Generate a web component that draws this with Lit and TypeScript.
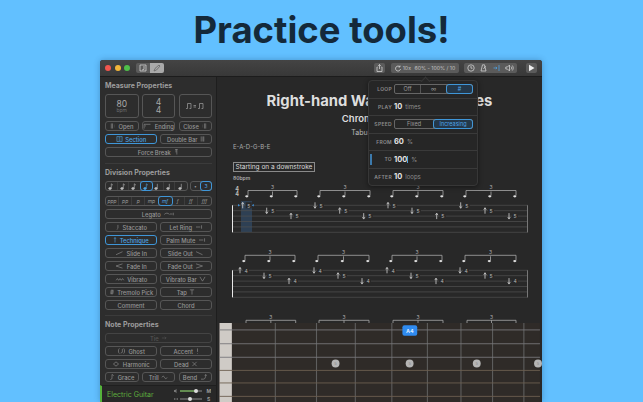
import { LitElement, css, html, svg } from 'lit';
import { customElement } from 'lit/decorators.js';

const ico = (d: string, w = 8, extra = '') => html`<svg class="ico ${extra}" width=${w} height="7" viewBox="0 0 ${w} 7"><path d=${d}></path></svg>`;

const ICONS: Record<string, ReturnType<typeof ico>> = {
  open: ico('M1 .5V6.500M2.500 .5V6.500M4.500 2.500h.5M4.500 4.500h.5', 6),
  ending: ico('M.5 6.500V1.500H8M2 4V2.800', 9),
  close: ico('M5 .5V6.500M3.500 .5V6.500M1 2.500h.5M1 4.500h.5', 6),
  section: ico('M.5 .5h6v6h-6zM2.500 2h2M2.500 3.500h2M2.500 5h2', 7),
  dbl: ico('M1 .5V6.500M3 .5V6.500M4 .5V6.500', 5),
  pilcrow: ico('M2 .5h3M4 .5V6.500M3 .5V4', 6),
  legato: ico('M.5 4c2-2 4-2 6 0M7 3.500h3M11 2v3', 12),
  staccato: ico('M3 1V5M3 5.500l-1 .5M1 6.500h.3', 5),
  letring: ico('M.5 3.500h5M7 1.500v4', 8),
  tech: ico('M2 6.500V1M1 2l1-1.500L3 2', 4),
  slidein: ico('M.5 5.500L8 2', 9),
  slideout: ico('M.5 2L8 5.500', 9),
  fadein: ico('M8 1L.5 3.500L8 6', 9),
  fadeout: ico('M.5 1L8 3.500L.5 6', 9),
  vib: ico('M.5 5l1.500-2l1.500 2l1.500-2l1.500 2l1.500-2l1.500 2', 10),
  vibbar: ico('M.5 1L3.500 6L6.500 1', 7),
  tremolo: ico('M3 .5V6.500M1 2.500l4-1M1 4l4-1M1 5.500l4-1', 6),
  tap: ico('M.5 1h5M3 1v5.500', 6),
  tie: ico('M.5 3.500h5M4 2l1.500 1.500L4 5', 6),
  ghost: ico('M2 .5C.5 2 .5 5 2 6.500M7 .5C8.500 2 8.500 5 7 6.500M5.500 1v4l-2 1', 9),
  accent: ico('M1.500 .5V4.500M1.500 5.800v.7', 3),
  harmonic: ico('M4 1l3 2.500L4 6L1 3.500z', 8),
  dead: ico('M1 1l5 5M6 1L1 6', 7),
  grace: ico('M3 .5V5.500M3 5.500l-2 1M3 .5l2 1.500', 6),
  trill: ico('M.5 4c1-2 2-2 3 0s2 2 3 0', 7),
  bend: ico('M.5 6h3C5 6 6 4 6 1M5 2l1-1.500L7 2', 8),
};

interface Btn { t: string; i?: string; after?: boolean; on?: boolean; off?: boolean }

// fret positions and tab data are read straight off the reference
const STAFF_A = [
  [242.7, 1, 0, 5], [266.7, 0, 1, 5], [291, 1, 2, 5], [315, 0, 0, 5], [339.7, 1, 1, 5], [363.7, 0, 2, 5],
  [388, 1, 0, 5], [412, 0, 1, 5], [436.7, 1, 2, 5], [460.7, 0, 0, 5], [485, 1, 1, 5], [509, 0, 2, 5],
];
const STAFF_B = [
  [240, 1, 0, 4], [264, 0, 1, 5], [289, 1, 2, 4], [314, 0, 0, 4], [338, 1, 1, 5], [362, 0, 2, 4],
  [387, 1, 0, 4], [411, 0, 1, 5], [436, 1, 2, 4], [460, 0, 0, 4], [485, 1, 1, 5], [509, 0, 2, 4],
];

const triplet = (x1: number, x2: number, y: number) => {
  const mid = (x1 + x2) / 2;
  return svg`
    <path class="beam" d="M${x1} ${y + 5}V${y}H${x2}V${y + 5}M${mid} ${y + 1}V${y + 5}"></path>
    <text class="tn" x=${mid} y=${y - 1.5} text-anchor="middle">3</text>
    ${[x1, mid, x2].map((x) => svg`<ellipse class="head" cx=${x - 1.2} cy=${y + 5.8} rx="1.600" ry="1.100"></ellipse>`)}`;
};

const staff = (top: number, rows: number[][]) => {
  const ys = [0, 5.4, 10.8, 16.2, 21.6, 27].map((d) => top + d);
  return svg`
    ${ys.map((y) => svg`<line class="line" x1="232" x2="528" y1=${y} y2=${y}></line>`)}
    <line class="bar" x1="232.500" x2="232.500" y1=${top} y2=${top + 27}></line>
    <line class="endbar" x1="527.500" x2="527.500" y1=${top} y2=${top + 27}></line>
    ${rows.map(([x, up, s, n]) => {
      const y = ys[s];
      const d = up
        ? `M${x} ${y + 3}V${y - 2.500}M${x - 1.200} ${y - 1}L${x} ${y - 3}L${x + 1.200} ${y - 1}`
        : `M${x} ${y - 3}V${y + 2.500}M${x - 1.200} ${y + 1}L${x} ${y + 3}L${x + 1.200} ${y + 1}`;
      return svg`<rect class="mask" x=${x + 3} y=${y - 3} width="6" height="6"></rect>
        <path class="arrow" d=${d}></path>
        <text class="fret" x=${x + 4.5} y=${y + 2.300}>${n}</text>`;
    })}`;
};

@customElement('app-root')
export class AppRoot extends LitElement {
  static styles = css`
    :host {
      display: flex;
      flex-direction: column;
      width: 643px;
      height: 402px;
      overflow: hidden;
      background: #62c0ff;
      font-family: Inter, 'Liberation Sans', sans-serif;
    }
    h1 {
      margin: 0;
      height: 60px;
      line-height: 60px;
      text-align: center;
      font-size: 36.500px;
      font-weight: 700;
      color: #14293a;
    }
    .win {
      flex: 1;
      min-height: 0;
      margin: 0 101px 0 100px;
      display: flex;
      flex-direction: column;
      background: #282828;
      border-radius: 3px 3px 0 0;
      overflow: hidden;
      box-shadow: 0 0 6px rgba(0, 40, 80, 0.3);
    }
    .bar-top {
      height: 17px;
      flex: none;
      display: flex;
      align-items: center;
      padding-left: 5px;
      background: linear-gradient(#444, #383838);
      border-bottom: 1px solid #1c1c1c;
      box-sizing: border-box;
    }
    .lights { display: flex; gap: 3.500px; margin-right: 6px; }
    .lights i { width: 6px; height: 6px; border-radius: 50%; }
    .tb {
      height: 10px;
      background: #5b5b5b;
      border-radius: 2px;
      display: flex;
      align-items: center;
      justify-content: center;
      color: #c4c4c4;
      font-size: 5.200px;
      white-space: nowrap;
    }
    .tb svg { fill: none; stroke: #d0d0d0; stroke-width: 0.800; }
    .seg-a { width: 14px; }
    .seg-b { width: 14px; background: #a9a9a9; }
    .seg-b svg { stroke: #666; }
    .spring { flex: 1; }
    .share { width: 11px; margin-right: 6px; }
    .range { width: 68px; margin-right: 5px; gap: 2px; }
    .tools { width: 53px; margin-right: 9px; justify-content: space-around; }
    .play { width: 11px; margin-right: 5px; }
    .body { flex: 1; min-height: 0; display: flex; }
    .side {
      width: 117px;
      flex: none;
      box-sizing: border-box;
      background: #2d2d2d;
      border-right: 1px solid #1e1e1e;
      display: flex;
      flex-direction: column;
      color: #a2a2a2;
    }
    .props { padding: 4px 4px 0 5px; flex: 1; min-height: 0; }
    .h {
      height: 10px;
      line-height: 10px;
      font-size: 7px;
      font-weight: 700;
      color: #9c9c9c;
      margin-bottom: 3px;
    }
    .sep { height: 1px; background: #3b3b3b; margin: 6px 0 4px; }
    .sep.low { margin: 5px 0 4px; }
    .boxes { display: grid; grid-template-columns: repeat(3, 33.500px); justify-content: space-between; margin-bottom: 3px; }
    .big {
      height: 24px;
      box-sizing: border-box;
      border: 1px solid #565656;
      border-radius: 3px;
      display: flex;
      flex-direction: column;
      align-items: center;
      justify-content: center;
      font-size: 8.500px;
      line-height: 8px;
      color: #a9a9a9;
    }
    .big small { font-size: 5px; line-height: 5px; color: #6f6f6f; }
    .big svg { fill: none; stroke: #a0a0a0; stroke-width: 0.700; }
    .rows { display: flex; flex-direction: column; gap: 3px; }
    .r2, .r3 { display: grid; gap: 3px; }
    .r2 { grid-template-columns: 52px 52px; justify-content: space-between; }
    .r3 { grid-template-columns: repeat(3, 33.500px); justify-content: space-between; }
    .b {
      height: 10px;
      box-sizing: border-box;
      border: 1px solid #565656;
      border-radius: 3px;
      display: flex;
      align-items: center;
      justify-content: center;
      gap: 2.500px;
      font-size: 5.800px;
      font-weight: 500;
      color: #969696;
      white-space: nowrap;
    }
    .b.on { border-color: #3f96d8; color: #4fa6e6; }
    .b.off { color: #555; border-color: #444; }
    .ico { fill: none; stroke: currentColor; stroke-width: 0.700; flex: none; height: 6px; }
    .notes { display: flex; justify-content: space-between; margin-bottom: 5px; }
    .cells {
      height: 10px;
      box-sizing: border-box;
      display: flex;
      border: 1px solid #565656;
      border-radius: 3px;
      font-size: 5px;
      color: #999;
    }
    .cells span {
      display: flex;
      align-items: center;
      justify-content: center;
      width: 11.500px;
      border-right: 1px solid #3d3d3d;
      box-sizing: border-box;
    }
    .cells span:last-child { border-right: 0; }
    .cells span.on { outline: 1px solid #3f96d8; border-radius: 2px; border-right: 0; color: #4fa6e6; }
    .cells.small span { width: 10px; }
    .cells.dyn { margin-bottom: 3px; font-style: italic; }
    .cells.dyn span { width: 13.250px; }
    .cells svg { fill: #bbb; stroke: #bbb; stroke-width: 0.600; }
    .cells .on svg { fill: #4fa6e6; stroke: #4fa6e6; }
    .track {
      margin-top: 3px;
      height: 17px;
      flex: none;
      box-sizing: border-box;
      border-left: 2px solid #55b33b;
      border-top: 1px solid #1f1f1f;
      background: #282828;
      display: flex;
      align-items: center;
      justify-content: space-between;
      padding: 0 5px;
      font-size: 7px;
      color: #5fae3e;
    }
    .mix { display: flex; flex-direction: column; gap: 2px; padding-top: 1px; }
    .mix svg { display: block; }
    .main { flex: 1; min-width: 0; position: relative; display: flex; flex-direction: column; }
    .head-t { text-align: center; color: #ddd; }
    .title { height: 16px; line-height: 16px; margin-top: 16px; font-size: 14.800px; font-weight: 700; color: #dedede; }
    .sub { height: 12px; line-height: 12px; margin-top: 4px; font-size: 9.500px; font-weight: 600; }
    .by { height: 10px; line-height: 10px; margin-top: 3px; font-size: 7px; color: #bbb; }
    .tun { margin: 4px 0 0 16px; height: 10px; line-height: 10px; font-size: 6px; color: #a8a8a8; }
    .note {
      align-self: flex-start;
      margin: 10px 0 0 16px;
      height: 10px;
      line-height: 8px;
      box-sizing: border-box;
      border: 1px solid #8a8a8a;
      padding: 0 1.500px;
      font-size: 6.500px;
      color: #dadada;
      white-space: nowrap;
    }
    .bpm { margin: 2px 0 0 16px; height: 8px; line-height: 8px; font-size: 5px; font-weight: 600; color: #aaa; }
    .score { display: block; flex: none; }
    .line { stroke: #505050; stroke-width: 0.700; }
    .bar { stroke: #e8e8e8; stroke-width: 1; }
    .endbar { stroke: #777; stroke-width: 1; }
    .mask { fill: #282828; }
    .arrow { fill: none; stroke: #d0d0d0; stroke-width: 0.800; }
    .fret { font-size: 5px; fill: #b8b8b8; }
    .tn { font-size: 5px; fill: #aaa; }
    .ts { font-size: 5.500px; font-weight: 700; fill: #bbb; }
    .beam { fill: none; stroke: #a8a8a8; stroke-width: 0.800; }
    .head { fill: #ddd; }
    .sel { fill: rgba(56, 110, 165, 0.35); }
    .caret { fill: #3f8fd8; }
    .str { stroke: #77777a; stroke-width: 0.900; }
    .str.w { stroke: #6d5f50; }
    .fr { stroke: #5e5e5e; stroke-width: 1.100; }
    .dot { fill: #b5b5b5; }
    .dt { font-size: 4px; fill: #888; }
    .badge { fill: #2f8bf0; }
    .bt { font-size: 5.500px; font-weight: 700; fill: #d7e9ff; }
    .pop {
      position: absolute;
      left: 151px;
      top: 3px;
      width: 110px;
      height: 106px;
      box-sizing: border-box;
      background: #262626;
      border: 1px solid #373737;
      border-radius: 4px;
      box-shadow: 0 1px 5px rgba(0, 0, 0, 0.45);
      display: flex;
      flex-direction: column;
    }
    .pop::before {
      content: '';
      position: absolute;
      left: 53px;
      top: -3.500px;
      width: 6px;
      height: 6px;
      background: #262626;
      border-left: 1px solid #373737;
      border-top: 1px solid #373737;
      transform: rotate(45deg);
    }
    .pr {
      flex: 1;
      display: flex;
      align-items: center;
      gap: 2px;
      border-bottom: 1px solid #3a3a3a;
      position: relative;
      font-size: 6px;
      color: #8d8d8d;
    }
    .pr:last-child { border-bottom: 0; }
    .pl {
      width: 23px;
      flex: none;
      text-align: right;
      font-size: 5px;
      font-weight: 600;
      letter-spacing: 0.300px;
      color: #8d8d8d;
    }
    .pr b { font-size: 7.500px; font-weight: 700; color: #e4e4e4; margin-right: 1px; }
    .pseg {
      display: flex;
      width: 79px;
      height: 10px;
      box-sizing: border-box;
      border: 1px solid #666;
      border-radius: 2px;
      font-size: 5.500px;
      color: #9a9a9a;
    }
    .pseg span { flex: 1; display: flex; align-items: center; justify-content: center; border-right: 1px solid #555; }
    .pseg span:last-child { border-right: 0; }
    .pseg .on { outline: 1px solid #3f96d8; border-radius: 2px; color: #4fa6e6; background: #24384a; }
    .mark { position: absolute; left: 1px; top: 3px; width: 1.500px; height: 11px; background: #3c79ab; }
    .cur { display: inline-block; width: 0.800px; height: 7px; background: #4fa6e6; vertical-align: -1px; }
  `;

  private btn(b: Btn) {
    const i = b.i ? ICONS[b.i] : '';
    return html`<div class="b ${b.on ? 'on' : ''} ${b.off ? 'off' : ''}">
      ${b.after ? '' : i}<span>${b.t}</span>${b.after ? i : ''}
    </div>`;
  }

  private noteIcon(flags: number) {
    return html`<svg width="6" height="7" viewBox="0 0 6 7">
      <ellipse cx="2" cy="5.500" rx="1.400" ry="1"></ellipse>
      <path fill="none" d="M3.300 5.500V.8"></path>
      ${flags ? svg`<path fill="none" d="M3.300 .8L5 2.200"></path>` : ''}
    </svg>`;
  }

  render() {
    const rows: Btn[][] = [
      [{ t: 'Staccato', i: 'staccato' }, { t: 'Let Ring', i: 'letring', after: true }],
      [{ t: 'Technique', i: 'tech', on: true }, { t: 'Palm Mute', i: 'letring', after: true }],
      [{ t: 'Slide In', i: 'slidein' }, { t: 'Slide Out', i: 'slideout', after: true }],
      [{ t: 'Fade In', i: 'fadein' }, { t: 'Fade Out', i: 'fadeout', after: true }],
      [{ t: 'Vibrato', i: 'vib' }, { t: 'Vibrato Bar', i: 'vibbar', after: true }],
      [{ t: 'Tremolo Pick', i: 'tremolo' }, { t: 'Tap', i: 'tap', after: true }],
      [{ t: 'Comment' }, { t: 'Chord' }],
    ];
    const dyn = ['ppp', 'pp', 'p', 'mp', 'mf', 'f', 'ff', 'fff'];
    const frets = [274, 315.7, 355, 392, 428, 462, 494, 525.7];
    const dots = [335, 410, 478, 540];
    const strings = [329, 343, 356.7, 370, 382.7, 396.3];
    return html`
      <h1>Practice tools!</h1>
      <div class="win">
        <div class="bar-top">
          <div class="lights">
            <i style="background:#f0564e"></i><i style="background:#f2b53a"></i><i style="background:#4fc04a"></i>
          </div>
          <div class="tb seg-a" style="border-radius:2px 0 0 2px">
            <svg width="8" height="8" viewBox="0 0 8 8"><path d="M1 1h6v6h-6zM5 2v3.500l-2 .5"></path></svg>
          </div>
          <div class="tb seg-b" style="border-radius:0 2px 2px 0">
            <svg width="8" height="8" viewBox="0 0 8 8"><path d="M1 7l1-2.500L6 1l1 1L3.500 6z"></path></svg>
          </div>
          <div class="spring"></div>
          <div class="tb share">
            <svg width="7" height="8" viewBox="0 0 7 8"><path d="M1.500 3H1v4.500h5V3h-.5M3.500 5V.5M2.200 1.800L3.500 .5l1.300 1.300"></path></svg>
          </div>
          <div class="tb range">
            <svg width="6" height="7" viewBox="0 0 6 7"><path d="M5 2A2.500 2.500 0 1 0 5.500 4M5 .5V2H3.500"></path></svg>
            <span>10x</span><span>&nbsp;60% - 100% / 10</span>
          </div>
          <div class="tb tools">
            <svg width="8" height="8" viewBox="0 0 8 8"><circle cx="4" cy="4" r="3.200"></circle><path d="M4 2V4.200H5.500"></path></svg>
            <svg width="7" height="8" viewBox="0 0 7 8"><path d="M2.500 .8h2L6 7H1zM3.500 5L5.500 2"></path></svg>
            <svg width="7" height="8" viewBox="0 0 7 8" style="stroke:#4f9fdd"><path d="M6 1V7M.5 4H4M2.800 2.800L4 4L2.800 5.200"></path></svg>
            <svg width="9" height="8" viewBox="0 0 9 8"><path d="M.8 3H2.500L4.500 1V7L2.500 5H.8zM6 2.500c.8 1 .8 2 0 3M7.300 1.500c1.200 1.500 1.200 3.500 0 5"></path></svg>
          </div>
          <div class="tb play">
            <svg width="7" height="8" viewBox="0 0 7 8"><path style="fill:#eee;stroke:none" d="M1 .8L6.500 4L1 7.200z"></path></svg>
          </div>
        </div>
        <div class="body">
          <div class="side">
            <div class="props">
              <div class="h">Measure Properties</div>
              <div class="boxes">
                <div class="big"><span>80</span><small>bpm</small></div>
                <div class="big"><span>4</span><span>4</span></div>
                <div class="big">
                  <svg width="20" height="8" viewBox="0 0 20 8"><path d="M1 6.500h1.500V1.500h3.500V6.500H4.500M13 6.500h1.500V1.500h3.500V6.500H16.500M8.500 3.500h2.500M8.500 5h2.500"></path></svg>
                </div>
              </div>
              <div class="rows">
                <div class="r3">
                  ${this.btn({ t: 'Open', i: 'open' })}
                  ${this.btn({ t: 'Ending', i: 'ending' })}
                  ${this.btn({ t: 'Close', i: 'close', after: true })}
                </div>
                <div class="r2">
                  ${this.btn({ t: 'Section', i: 'section', on: true })}
                  ${this.btn({ t: 'Double Bar', i: 'dbl', after: true })}
                </div>
                ${this.btn({ t: 'Force Break', i: 'pilcrow', after: true })}
              </div>
              <div class="sep"></div>
              <div class="h">Division Properties</div>
              <div class="notes">
                <div class="cells">
                  ${[1, 1, 1, 1, 0, 0, 0].map((f, n) => html`<span class=${n === 3 ? 'on' : ''}>${this.noteIcon(f)}</span>`)}
                </div>
                <div class="cells small"><span>•</span><span class="on">3</span></div>
              </div>
              <div class="cells dyn">
                ${dyn.map((d) => html`<span class=${d === 'mf' ? 'on' : ''}>${d}</span>`)}
              </div>
              <div class="rows">
                ${this.btn({ t: 'Legato', i: 'legato', after: true })}
                ${rows.map((r) => html`<div class="r2">${r.map((b) => this.btn(b))}</div>`)}
              </div>
              <div class="sep low"></div>
              <div class="h">Note Properties</div>
              <div class="rows">
                ${this.btn({ t: 'Tie', i: 'tie', after: true, off: true })}
                <div class="r2">
                  ${this.btn({ t: 'Ghost', i: 'ghost' })}
                  ${this.btn({ t: 'Accent', i: 'accent', after: true })}
                </div>
                <div class="r2">
                  ${this.btn({ t: 'Harmonic', i: 'harmonic' })}
                  ${this.btn({ t: 'Dead', i: 'dead', after: true })}
                </div>
                <div class="r3">
                  ${this.btn({ t: 'Grace', i: 'grace' })}
                  ${this.btn({ t: 'Trill', i: 'trill', after: true })}
                  ${this.btn({ t: 'Bend', i: 'bend', after: true })}
                </div>
              </div>
            </div>
            <div class="track">
              <span>Electric Guitar</span>
              <div class="mix">
                <svg width="38" height="6" viewBox="0 0 38 6">
                  <path d="M1 2h1.200l1.300-1.200v4.400L2.200 4H1z" fill="#777"></path>
                  <line x1="7" x2="29" y1="3" y2="3" stroke="#8a8a8a"></line>
                  <line x1="7" x2="23" y1="3" y2="3" stroke="#6fbf4a"></line>
                  <circle cx="23" cy="3" r="2" fill="#ddd"></circle>
                  <text x="33.500" y="5" font-size="5" font-weight="700" fill="#999">M</text>
                </svg>
                <svg width="38" height="6" viewBox="0 0 38 6">
                  <path d="M1 3h4M1 3l1-1M1 3l1 1M5 3l-1-1M5 3l-1 1" stroke="#777" fill="none" stroke-width=".6"></path>
                  <line x1="7" x2="29" y1="3" y2="3" stroke="#8a8a8a"></line>
                  <circle cx="17" cy="3" r="2" fill="#ddd"></circle>
                  <text x="34" y="5" font-size="5" font-weight="700" fill="#999">S</text>
                </svg>
              </div>
            </div>
          </div>
          <div class="main">
            <div class="head-t title">Right-hand Warm-up Exercises</div>
            <div class="head-t sub">Chromatic Scale</div>
            <div class="head-t by">Tabulature Guide</div>
            <div class="tun">E-A-D-G-B-E</div>
            <div class="note">Starting on a downstroke</div>
            <div class="bpm">80bpm</div>
            <svg class="score" width="325" height="141" viewBox="217 181 325 141">
              <rect class="sel" x="241" y="200" width="11" height="31"></rect>
              <text class="ts" x="237" y="190" text-anchor="middle">4</text>
              <text class="ts" x="237" y="195" text-anchor="middle">4</text>
              ${[[248, 297], [320, 370], [393, 443], [466, 516]].map(([a, b]) => triplet(a, b, 189.500))}
              ${staff(204.300, STAFF_A)}
              <path class="caret" d="M239 204.300l-2-1.300v2.600zM250.800 204.300l2-1.300v2.600z" transform="translate(1 0)"></path>
              ${[[245, 295], [318, 369], [392, 442], [465, 516]].map(([a, b]) => triplet(a, b, 254.300))}
              ${staff(269.300, STAFF_B)}
              ${[[246, 295.7], [319, 369], [393, 443], [467, 516]].map(([a, b]) => svg`
                <path class="beam" d="M${a} 322V319.300H${b}V322M${(a + b) / 2} 319.300V322"></path>
                <text class="tn" x=${(a + b) / 2} y="317.500" text-anchor="middle">3</text>`)}
            </svg>
            <svg width="325" height="80" viewBox="217 322 325 80">
              <rect x="217" y="322" width="325" height="80" fill="#2f2b28"></rect>
              <rect x="217.500" y="322" width="12.500" height="80" fill="#cfcbc6"></rect>
              ${frets.map((x) => svg`<line class="fr" x1=${x} x2=${x} y1="322" y2="402"></line>`)}
              ${strings.map((y, n) => svg`<line class="str ${n > 2 ? 'w' : ''}" x1="217" x2="542" y1=${y} y2=${y}></line>`)}
              ${dots.map((x) => svg`<circle class="dot" cx=${x} cy="363" r="4"></circle>
                <text class="dt" x=${x} y="364.500" text-anchor="middle">5</text>`)}
              <rect class="badge" x="402.700" y="324.300" width="15" height="10.700" rx="2"></rect>
              <text class="bt" x="410.200" y="331.700" text-anchor="middle">A4</text>
            </svg>
            <div class="pop">
              <div class="pr"><span class="pl">LOOP</span>
                <div class="pseg"><span>Off</span><span>∞</span><span class="on">#</span></div></div>
              <div class="pr"><span class="pl">PLAY</span><b>10</b>times</div>
              <div class="pr"><span class="pl">SPEED</span>
                <div class="pseg"><span>Fixed</span><span class="on">Increasing</span></div></div>
              <div class="pr"><span class="pl">FROM</span><b>60</b>%</div>
              <div class="pr"><i class="mark"></i><span class="pl">TO</span><b>100<i class="cur"></i></b>%</div>
              <div class="pr"><span class="pl">AFTER</span><b>10</b>loops</div>
            </div>
          </div>
        </div>
      </div>
    `;
  }
}
